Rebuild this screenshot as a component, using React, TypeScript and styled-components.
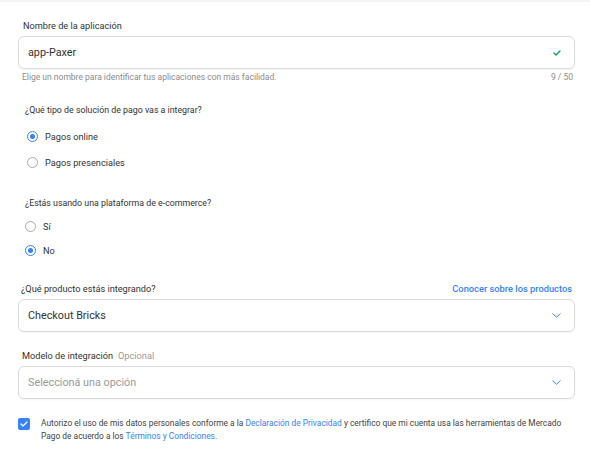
import React from "react";
import styled, { createGlobalStyle } from "styled-components";

const Global = createGlobalStyle`
  html, body { margin: 0; padding: 0; background: #fff; }
  body { font-family: "Roboto", "Liberation Sans", Arial, sans-serif; color: #333; }
  * { box-sizing: border-box; }
`;

const Page = styled.div`
  width: 590px;
  height: 455px;
  border-top: 2px solid #f3f3f3;
  padding: 0 15px 0 18px;
  display: flex;
  flex-direction: column;
`;

const Field = styled.div<{ $mt: number }>`
  margin-top: ${(p) => p.$mt}px;
  display: flex;
  flex-direction: column;
`;

const LabelRow = styled.div`
  display: flex;
  justify-content: space-between;
  align-items: center;
  padding: 0 3px 0 3px;
  height: 14px;
  line-height: 14px;
  margin-bottom: 3px;
`;

const Label = styled.span<{ $pl?: number }>`
  font-size: 9.2px;
  color: #333;
  padding-left: ${(p) => p.$pl ?? 2}px;
`;

const Optional = styled.span`
  color: #999;
  margin-left: 5px;
`;

const Link = styled.a`
  font-size: 9.3px;
  color: #3483fa;
  font-weight: 500;
  text-decoration: none;
`;

const Box = styled.div`
  height: 33px;
  border: 1px solid #dadada;
  border-radius: 6px;
  display: flex;
  align-items: center;
  justify-content: space-between;
  padding: 0 13px 0 9px;
  box-shadow: 0 1px 2px rgba(0,0,0,0.05);
`;

const Value = styled.span<{ $placeholder?: boolean }>`
  font-size: 10.8px;
  color: ${(p) => (p.$placeholder ? "#999" : "#333")};
`;

const Help = styled.div`
  display: flex;
  justify-content: space-between;
  font-size: 8.5px;
  line-height: 12px;
  color: #8c8c8c;
  padding: 0 2px 0 4px;
  margin-top: 2px;
`;

const Question = styled.div<{ $mt: number }>`
  margin-top: ${(p) => p.$mt}px;
  font-size: 8.8px;
  line-height: 14px;
  color: #333;
  padding-left: 7px;
  height: 14px;
`;

const Radios = styled.div<{ $pl: number; $mt: number; $gap: number }>`
  display: flex;
  flex-direction: column;
  gap: ${(p) => p.$gap}px;
  margin-top: ${(p) => p.$mt}px;
  padding-left: ${(p) => p.$pl}px;
`;

const RadioRow = styled.label`
  display: flex;
  align-items: center;
  gap: 7px;
  height: 14px;
  font-size: 9.2px;
  color: #333;
`;

const RadioCircle = styled.span<{ $on: boolean }>`
  width: 11px;
  height: 11px;
  border-radius: 50%;
  border: 1px solid ${(p) => (p.$on ? "#3483fa" : "#aaa")};
  display: flex;
  align-items: center;
  justify-content: center;
  &::after {
    content: "";
    width: 5px;
    height: 5px;
    border-radius: 50%;
    background: ${(p) => (p.$on ? "#3483fa" : "transparent")};
  }
`;

const Consent = styled.div`
  margin-top: 18px;
  display: flex;
  gap: 11px;
  align-items: flex-start;
`;

const CheckBox = styled.span`
  width: 12px;
  height: 12px;
  border-radius: 2px;
  background: #3483fa;
  display: flex;
  align-items: center;
  justify-content: center;
  flex: none;
  margin-top: 1px;
`;

const ConsentText = styled.p`
  margin: 0;
  font-size: 8.4px;
  line-height: 13px;
  color: #444;
`;

const InlineLink = styled.a`
  color: #3483fa;
  text-decoration: none;
`;

const Chevron = () => (
  <svg width="9" height="5" viewBox="0 0 9 5" fill="none">
    <path d="M0.8 0.8l3.7 3.4 3.7-3.4" stroke="#3483fa" strokeWidth="1" strokeLinecap="round" strokeLinejoin="round" />
  </svg>
);

const Check = ({ color, w = 9 }: { color: string; w?: number }) => (
  <svg width={w} height={w * 0.75} viewBox="0 0 8 6" fill="none">
    <path d="M1 3l2 2 4-4" stroke={color} strokeWidth="1.3" strokeLinecap="round" strokeLinejoin="round" />
  </svg>
);

const Radio = ({ on, children }: { on: boolean; children: React.ReactNode }) => (
  <RadioRow>
    <RadioCircle $on={on} />
    {children}
  </RadioRow>
);

export default function App() {
  return (
    <>
      <Global />
      <Page>
        <Field $mt={17}>
          <LabelRow>
            <Label $pl={2}>Nombre de la aplicación</Label>
          </LabelRow>
          <Box>
            <Value>app-Paxer</Value>
            <Check color="#00a650" w={8} />
          </Box>
          <Help>
            <span>Elige un nombre para identificar tus aplicaciones con más facilidad.</span>
            <span>9 / 50</span>
          </Help>
        </Field>

        <Question $mt={20}>¿Qué tipo de solución de pago vas a integrar?</Question>
        <Radios $pl={9} $mt={12} $gap={12}>
          <Radio on>Pagos online</Radio>
          <Radio on={false}>Pagos presenciales</Radio>
        </Radios>

        <Question $mt={27}>¿Estás usando una plataforma de e-commerce?</Question>
        <Radios $pl={7} $mt={9} $gap={10}>
          <Radio on={false}>Sí</Radio>
          <Radio on>No</Radio>
        </Radios>

        <Field $mt={25}>
          <LabelRow>
            <Label $pl={0}>¿Qué producto estás integrando?</Label>
            <Link>Conocer sobre los productos</Link>
          </LabelRow>
          <Box>
            <Value>Checkout Bricks</Value>
            <Chevron />
          </Box>
        </Field>

        <Field $mt={17}>
          <LabelRow>
            <Label $pl={1}>
              Modelo de integración<Optional>Opcional</Optional>
            </Label>
          </LabelRow>
          <Box>
            <Value $placeholder>Seleccioná una opción</Value>
            <Chevron />
          </Box>
        </Field>

        <Consent>
          <CheckBox>
            <Check color="#fff" w={8} />
          </CheckBox>
          <ConsentText>
            Autorizo el uso de mis datos personales conforme a la{" "}
            <InlineLink>Declaración de Privacidad</InlineLink> y certifico que mi cuenta usa las herramientas de Mercado
            Pago de acuerdo a los <InlineLink>Términos y Condiciones</InlineLink>.
          </ConsentText>
        </Consent>
      </Page>
    </>
  );
}
